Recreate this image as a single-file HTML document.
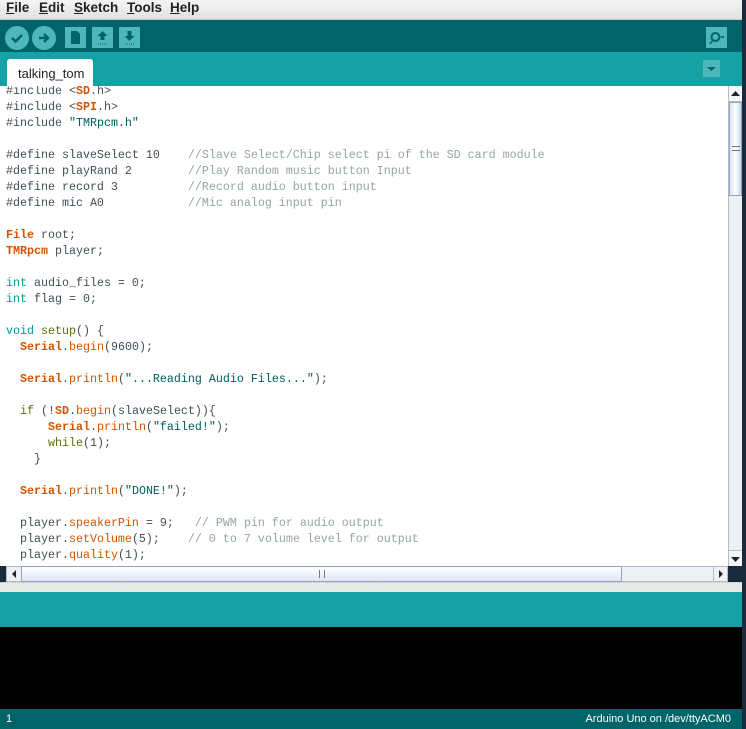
<!DOCTYPE html>
<html><head><style>
*{margin:0;padding:0;box-sizing:border-box}
body{width:746px;height:729px;overflow:hidden;background:#1a2a3a;position:relative;font-family:"Liberation Sans",sans-serif}
.menu{position:absolute;left:0;top:0;width:742px;height:20px;background:linear-gradient(#f4f4f4,#e2e2e2);border-bottom:1px solid #c8c8c8}
.menu span{position:absolute;top:0px;font-size:13.5px;font-weight:bold;color:#222}
.menu u{text-decoration:underline}
.tool{position:absolute;left:0;top:20px;width:742px;height:32px;background:#006468}
.circ{position:absolute;top:6px;width:24px;height:24px;border-radius:50%;background:#4db7bb}
.sq{position:absolute;top:7px;width:21px;height:21px;background:#4db7bb}
.tabs{position:absolute;left:0;top:52px;width:742px;height:34px;background:#17a1a5}
.tab{position:absolute;left:7px;top:7px;width:86px;height:27px;background:#fff;border-radius:3px 3px 0 0;font-size:13px;color:#222;padding:7px 0 0 11px}
.editor{position:absolute;left:0;top:86px;width:728px;height:480px;background:#fff;overflow:hidden}
pre{position:absolute;left:6px;top:-3px;font-family:"Liberation Mono",monospace;font-size:11.67px;line-height:16px;color:#434f54}
.k{color:#d35400;font-weight:bold}.f{color:#d35400}.t{color:#00979c}.c{color:#95a5a6}.s{color:#005c5f}.g{color:#5e6d03}
.vs{position:absolute;left:728px;top:86px;width:14px;height:480px;background:#eef0f4;border-left:1px solid #b8bcc4}
.hs{position:absolute;left:6px;top:566px;width:722px;height:16px;background:#eef0f4;border:1px solid #b8bcc4}
.div{position:absolute;left:0;top:582px;width:742px;height:10px;background:#e8eae8;border-top:1px dotted #bbb}
.teal{position:absolute;left:0;top:592px;width:742px;height:35px;background:#17a1a5}
.black{position:absolute;left:0;top:627px;width:742px;height:82px;background:#000}
.status{position:absolute;left:0;top:709px;width:742px;height:20px;background:#006468;color:#fff;font-size:11px}
</style></head><body>
<div class="menu">
<span style="left:6px"><u>F</u>ile</span><span style="left:39px"><u>E</u>dit</span><span style="left:74px"><u>S</u>ketch</span><span style="left:127px"><u>T</u>ools</span><span style="left:170px"><u>H</u>elp</span>
</div>
<div class="tool">
<div class="circ" style="left:5px"><svg width="24" height="24"><path d="M7 12l3.5 3.5L17 9" stroke="#006468" stroke-width="2.5" fill="none"/></svg></div>
<div class="circ" style="left:32px"><svg width="24" height="24"><path d="M7 12h8M12 8l4 4-4 4" stroke="#006468" stroke-width="2.5" fill="none"/></svg></div>
<div class="sq" style="left:65px"><svg width="21" height="21"><path d="M6 4h6l3 3v10H6z" fill="#006468"/></svg></div>
<div class="sq" style="left:92px"><svg width="21" height="21"><path d="M10.5 4l5 5h-3v4h-4V9h-3z" fill="#006468"/><path d="M6 17h9" stroke="#006468" stroke-dasharray="1 1"/></svg></div>
<div class="sq" style="left:119px"><svg width="21" height="21"><path d="M10.5 14l5-5h-3V4h-4v5h-3z" fill="#006468"/><path d="M6 17h9" stroke="#006468" stroke-dasharray="1 1"/></svg></div>
<div class="sq" style="left:706px;width:21px"><svg width="21" height="21"><circle cx="9.5" cy="10" r="4" stroke="#006468" stroke-width="2" fill="none"/><path d="M7 13l-3 4M15 10h3" stroke="#006468" stroke-width="1.5"/></svg></div>
</div>
<div class="tabs"><div class="tab">talking_tom</div>
<div style="position:absolute;left:703px;top:8px;width:17px;height:17px;background:#4db7bb"><svg width="17" height="17"><path d="M4 7h9l-4.5 4z" fill="#006468"/></svg></div></div>
<div class="editor"><pre>#include &lt;<span class="k">SD</span>.h&gt;
#include &lt;<span class="k">SPI</span>.h&gt;
#include <span class="s">"TMRpcm.h"</span>

#define slaveSelect 10    <span class="c">//Slave Select/Chip select pi of the SD card module</span>
#define playRand 2        <span class="c">//Play Random music button Input</span>
#define record 3          <span class="c">//Record audio button input</span>
#define mic A0            <span class="c">//Mic analog input pin</span>

<span class="k">File</span> root;
<span class="k">TMRpcm</span> player;

<span class="t">int</span> audio_files = 0;
<span class="t">int</span> flag = 0;

<span class="t">void</span> <span class="g">setup</span>() {
  <span class="k">Serial</span>.<span class="f">begin</span>(9600);

  <span class="k">Serial</span>.<span class="f">println</span>(<span class="s">"...Reading Audio Files..."</span>);

  <span class="g">if</span> (!<span class="k">SD</span>.<span class="f">begin</span>(slaveSelect)){
      <span class="k">Serial</span>.<span class="f">println</span>(<span class="s">"failed!"</span>);
      <span class="g">while</span>(1);
    }

  <span class="k">Serial</span>.<span class="f">println</span>(<span class="s">"DONE!"</span>);

  player.<span class="f">speakerPin</span> = 9;   <span class="c">// PWM pin for audio output</span>
  player.<span class="f">setVolume</span>(5);    <span class="c">// 0 to 7 volume level for output</span>
  player.<span class="f">quality</span>(1);
</pre></div>
<div class="vs">
<div style="position:absolute;left:0;top:0;width:13px;height:16px;border-bottom:1px solid #b8bcc4;background:#f4f5f7"><svg width="13" height="16"><path d="M2 10h9L6.5 5z" fill="#222"/></svg></div>
<div style="position:absolute;left:0;top:16px;width:13px;height:94px;background:linear-gradient(90deg,#dde6f4,#fff,#c8d6ee);border:1px solid #8ea4c8"><div style="position:absolute;left:2px;top:43px;width:8px;height:5px;border-top:1px solid #777;border-bottom:1px solid #777"></div></div>
<div style="position:absolute;left:0;bottom:0;width:13px;height:16px;border-top:1px solid #b8bcc4;background:#f4f5f7"><svg width="13" height="16"><path d="M2 6h9L6.5 11z" fill="#222"/></svg></div>
</div>
<div class="hs">
<div style="position:absolute;left:0;top:0;width:14px;height:14px"><svg width="14" height="14"><path d="M9 3v8L5 7z" fill="#222"/></svg></div>
<div style="position:absolute;left:14px;top:-1px;width:601px;height:16px;background:linear-gradient(#fff,#dde6f4);border:1px solid #8ea4c8"><div style="position:absolute;left:297px;top:3px;width:6px;height:8px;border-left:1px solid #777;border-right:1px solid #777"></div></div>
<div style="position:absolute;right:0;top:0;width:14px;height:14px;border-left:1px solid #b8bcc4"><svg width="14" height="14"><path d="M5 3v8l4-4z" fill="#222"/></svg></div>
</div>
<div class="div"></div>
<div class="teal"></div>
<div class="black"></div>
<div class="status"><span style="position:absolute;left:6px;top:4px">1</span><span style="position:absolute;right:11px;top:4px">Arduino Uno on /dev/ttyACM0</span></div>
</body></html>
